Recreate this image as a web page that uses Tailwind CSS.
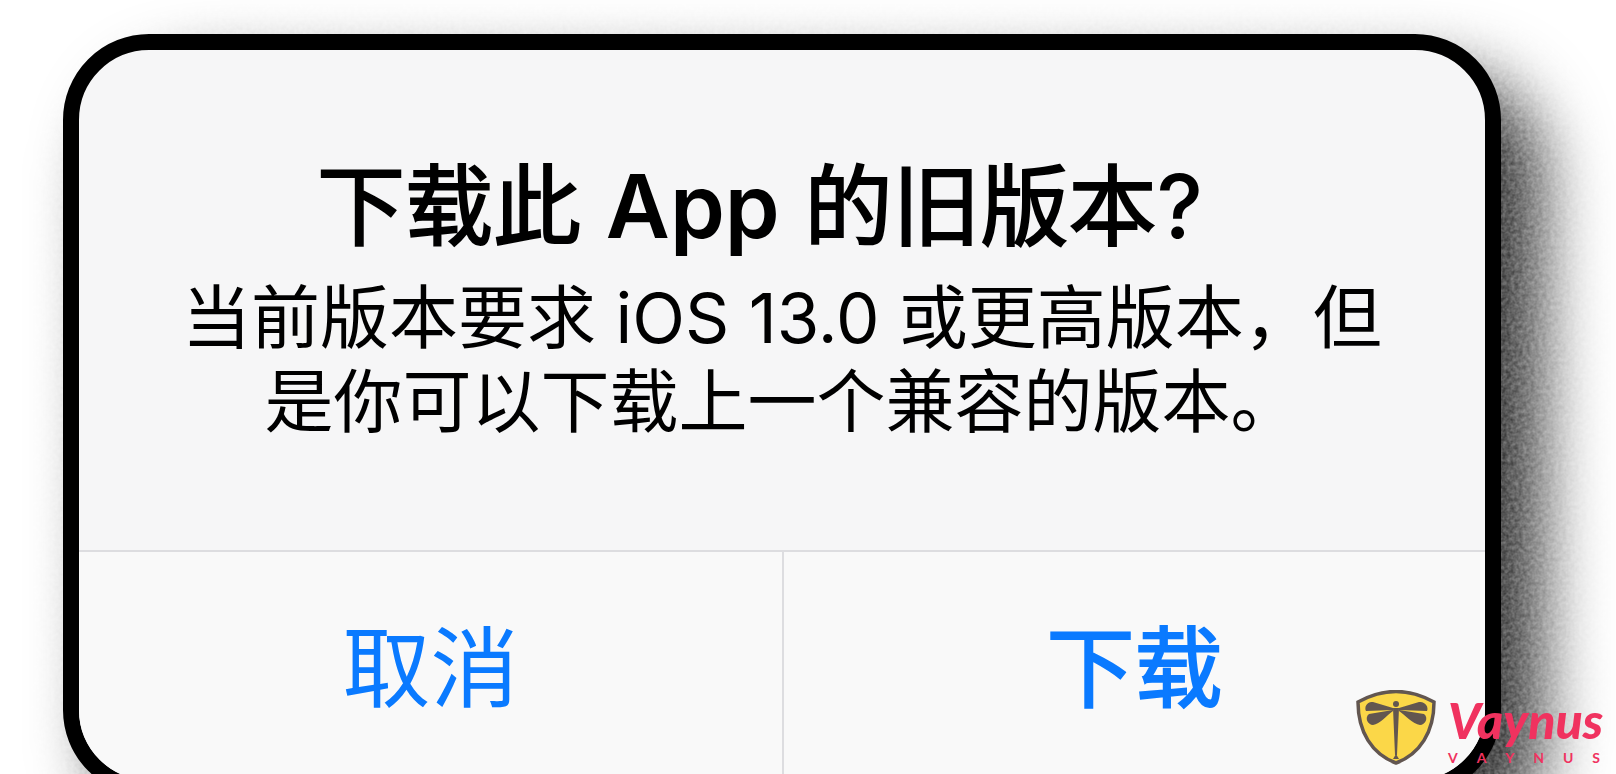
<!DOCTYPE html>
<html lang="zh-CN">
<head>
<meta charset="utf-8">
<title>下载此 App 的旧版本?</title>
<script src="https://cdn.jsdelivr.net/npm/@tailwindcss/browser@4"></script>
</head>
<body class="bg-white h-screen overflow-hidden font-['Inter','Noto_Sans_CJK_SC',sans-serif]">
<svg class="absolute size-0" aria-hidden="true">
  <filter id="grain" x="-10%" y="-15%" width="120%" height="130%" color-interpolation-filters="sRGB">
    <feGaussianBlur in="SourceGraphic" stdDeviation="34" result="soft"/>
    <feTurbulence type="fractalNoise" baseFrequency="0.25" numOctaves="2" seed="4"/>
    <feColorMatrix values="0 0 0 0 0  0 0 0 0 0  0 0 0 0 0  1 0 0 0 0" result="noise"/>
    <feComposite in="soft" in2="noise" operator="arithmetic" k1="0.5" k2="0.65"/>
  </filter>
</svg>
<main class="relative h-screen overflow-hidden pt-[34px] pl-[63px] pr-[115px]">
  <div class="relative">
    <div class="absolute top-10 left-10 -right-10 -bottom-12 rounded-[100px] bg-black/85 [filter:url(#grain)]"></div>
    <section role="alertdialog" aria-labelledby="title" aria-describedby="message" class="relative flex flex-col overflow-hidden rounded-[86px] border-16 border-black bg-[#f6f6f7] text-black">
      <div class="px-16 pt-[92px] pb-[106px] text-center">
        <h1 id="title" class="pr-11 text-[88px] leading-[128px] font-normal whitespace-nowrap [-webkit-text-stroke:2px_currentColor]">下载此 <span class="font-semibold [-webkit-text-stroke:0]">App</span> 的旧版本<span class="font-medium [-webkit-text-stroke:0]">?</span></h1>
        <p id="message" class="text-[69px] leading-[84px] pt-1.5">当前版本要求 iOS 13.0 或更高版本，但<br>是你可以下载上一个兼容的版本。</p>
      </div>
      <div class="grid grid-cols-2 border-t-2 border-[#dddde0] bg-[#f9f9f9] text-[88px] leading-[224px] text-[#0a7aff]">
        <button type="button" class="pt-1">取消</button>
        <button type="button" class="border-l-2 border-[#dddde0] pt-1 [-webkit-text-stroke:2px_currentColor]">下载</button>
      </div>
    </section>
  </div>
  <a href="#" aria-label="Vaynus" class="absolute right-4 bottom-2 flex items-end gap-3 text-[#f0325f]">
    <svg viewBox="0 0 80 76" class="w-20 h-[76px]" aria-hidden="true">
      <path d="M2 12Q40-9 78 12C78 42 64 64 40 73C16 64 2 42 2 12Z" fill="#fbd748" stroke="#625650" stroke-width="3.5"/>
      <g fill="#625650">
        <circle cx="40" cy="14" r="3"/>
        <path d="M37 18L17 12C11 11 8 17 10 21L37 20ZM43 18L63 12C69 11 73 17 71 21L43 20ZM37 20L13 24C8 28 12 35 17 35C24 34 31 25 37 21ZM43 20L68 24C73 28 69 35 64 35C57 34 49 25 43 21Z"/>
        <path d="M37 18h6L41 65h-2ZM40 64l3 5h-6Z"/>
      </g>
    </svg>
    <span class="flex w-38 flex-col font-['Lato']">
      <span class="text-[50px] leading-[60px] font-black italic">Vaynus</span>
      <span class="flex justify-between text-[14px] leading-4 font-bold"><span>V</span><span>A</span><span>Y</span><span>N</span><span>U</span><span>S</span></span>
    </span>
  </a>
</main>
</body>
</html>
